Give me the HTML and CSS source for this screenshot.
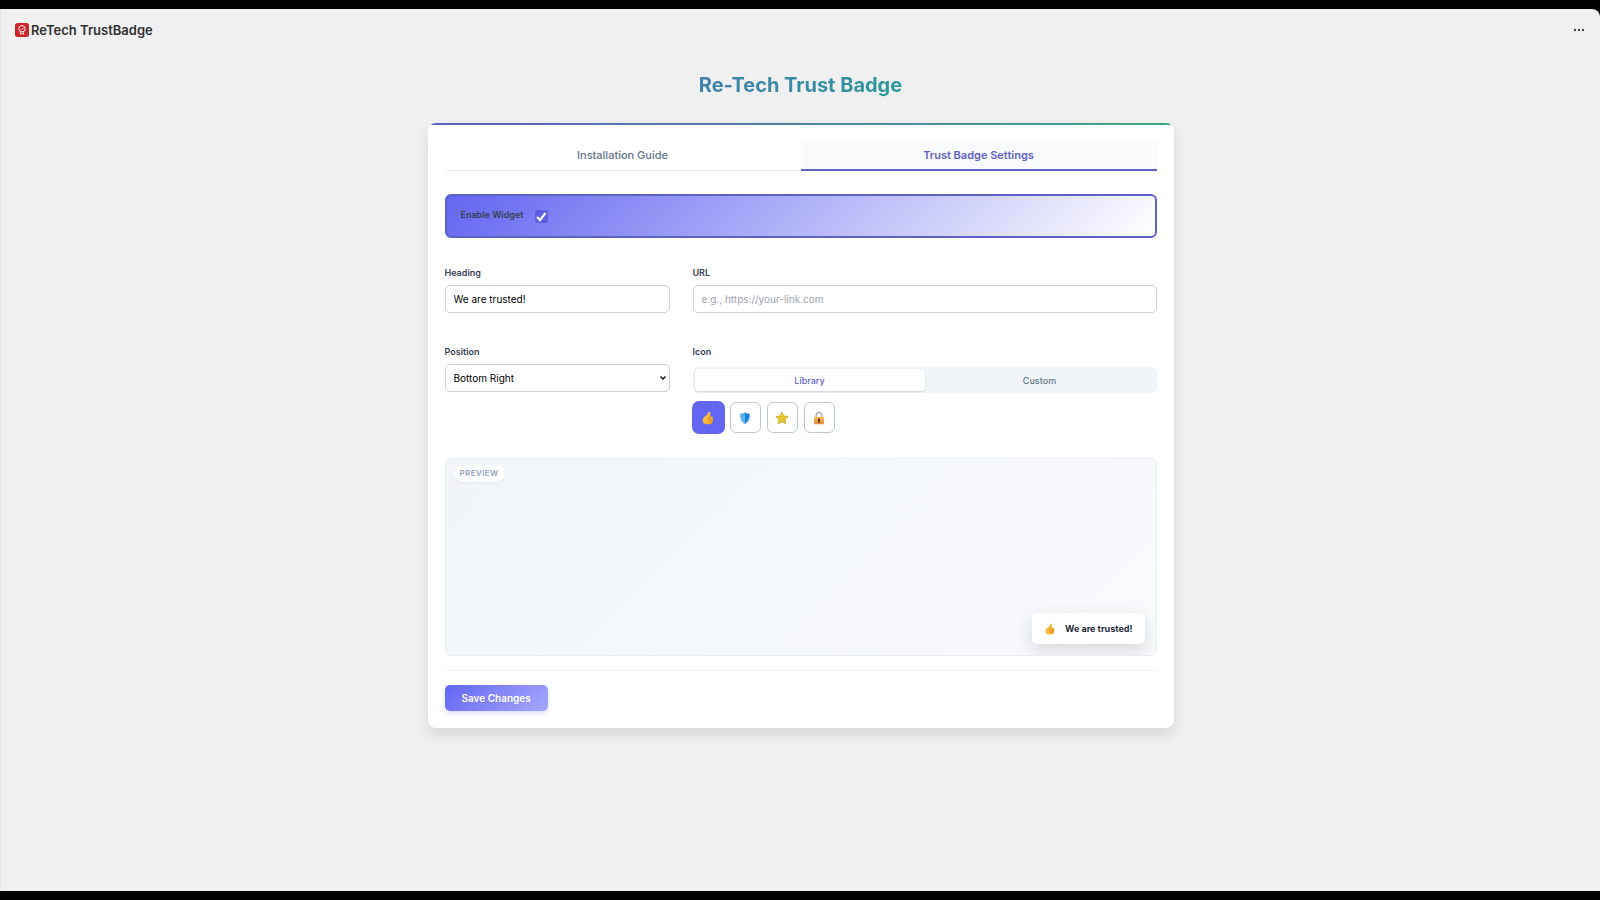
FILE: index.html
```html
<!DOCTYPE html>
<html lang="en">
<head>
    <meta charset="UTF-8">
    <meta name="viewport" content="width=device-width, initial-scale=1.0">
    <title>ReTech TrustBadge</title>
    <link rel="stylesheet" href="styles.css">
</head>
<body>
    <svg class="sprite" aria-hidden="true">
        <defs>
            <linearGradient id="thumb-fill" x1="0" y1="0" x2="1" y2="1">
                <stop offset="0" stop-color="#ffd45c"/>
                <stop offset="1" stop-color="#ef9b22"/>
            </linearGradient>
            <linearGradient id="lock-fill" x1="0" y1="0" x2="0" y2="1">
                <stop offset="0" stop-color="#f9bd62"/>
                <stop offset="1" stop-color="#e58a35"/>
            </linearGradient>
        </defs>
        <symbol id="icon-thumb" viewBox="0 0 16 16">
            <path d="M9.2.8c1.400 0 1.900 1.500 1.500 3.200L10.200 6.400h1.700c1.600 0 2.300 1.400 1.500 2.300.7.700.6 1.700-.1 2.200.4.900.1 1.800-.6 2.200.1 1.200-.7 2-2 2H6.800c-3 0-5-1.500-5-4.200 0-2.400 1.500-3.600 3.300-5.100C6.800 4.400 7.900 3.400 8 2 8 1.200 8.400.8 9.200.8z" fill="url(#thumb-fill)"/>
            <path d="M9.500 6.600c-1.500.6-2 1.700-1.500 2.700M9.500 8.700h3.600M9.400 10.900h3.600M9.500 13h3" fill="none" stroke="#d98218" stroke-width=".7" stroke-linecap="round"/>
        </symbol>
        <symbol id="icon-shield" viewBox="0 0 16 16">
            <path d="M8 1c1.700 1.200 3.400 1.700 5.800 1.800.3 5.800-1.500 9.900-5.800 12.400C3.700 12.700 1.900 8.600 2.200 2.800 4.600 2.700 6.300 2.200 8 1z" fill="#8fbbdc"/>
            <path d="M8 1.900c1.500 1 3.200 1.500 5 1.600.1 5-1.500 8.500-5 10.800z" fill="#1583d8"/>
            <path d="M8 1.900C6.500 2.900 4.800 3.400 3 3.500c-.1 5 1.500 8.500 5 10.800z" fill="#53b7f4"/>
        </symbol>
        <symbol id="icon-star" viewBox="0 0 16 16">
            <path d="M8 1.300l2.100 4.300 4.900.7-3.500 3.400.8 4.900L8 12.300l-4.300 2.300.8-4.900L1 6.300l4.900-.7z" fill="#e6c62f" stroke="#d2ae28" stroke-width="1" stroke-linejoin="round"/>
        </symbol>
        <symbol id="icon-lock" viewBox="0 0 16 16">
            <path d="M4.700 7.500V5a3.300 3.300 0 0 1 6.600 0v2.500" fill="none" stroke="#a9adb2" stroke-width="1.500"/>
            <rect x="2.200" y="6.600" width="11.600" height="8.400" rx="1.200" fill="url(#lock-fill)"/>
            <path d="M8 8.500a1.400 1.400 0 0 1 .8 2.500l.4 2.400H6.800l.4-2.400A1.400 1.400 0 0 1 8 8.500z" fill="#5a3213"/>
        </symbol>
    </svg>

    <div class="app">
        <header class="topbar">
            <div class="brand">
                <svg class="brand-logo" viewBox="0 0 14 14" aria-hidden="true">
                    <rect width="14" height="14" rx="2.500" fill="#c9252d"/>
                    <circle cx="7" cy="5.800" r="3.200" fill="none" stroke="#fff" stroke-width=".9"/>
                    <path d="M5.500 5.800l1.100 1.100L8.600 4.800M5.400 8.800v2.500L7 10.500l1.600.8V8.800" fill="none" stroke="#fff" stroke-width=".8"/>
                </svg>
                <span>ReTech TrustBadge</span>
            </div>
            <button type="button" class="menu-btn" aria-label="More actions">
                <svg viewBox="0 0 12 4" aria-hidden="true">
                    <circle cx="2" cy="2" r="1.200"/>
                    <circle cx="6" cy="2" r="1.200"/>
                    <circle cx="10" cy="2" r="1.200"/>
                </svg>
            </button>
        </header>

        <main class="container">
            <h1>Re-Tech Trust Badge</h1>

            <form class="card">
                <div class="tabs" role="tablist">
                    <button type="button" class="tab" role="tab">Installation Guide</button>
                    <button type="button" class="tab active" role="tab" aria-selected="true">Trust Badge Settings</button>
                </div>

                <div class="enable-box">
                    <label for="enable">Enable Widget</label>
                    <input type="checkbox" id="enable" class="enable-check" checked>
                </div>

                <div class="form-grid">
                    <div class="field">
                        <label for="heading">Heading</label>
                        <input type="text" id="heading" class="control" value="We are trusted!">
                    </div>
                    <div class="field">
                        <label for="url">URL</label>
                        <input type="text" id="url" class="control" placeholder="e.g., https://your-link.com">
                    </div>
                    <div class="field">
                        <label for="position">Position</label>
                        <div class="select-wrap">
                            <select id="position" class="control">
                                <option>Bottom Right</option>
                            </select>
                            <svg class="chevron" viewBox="0 0 8 6" aria-hidden="true"><path d="M1.500 1.500L4 4l2.500-2.500"/></svg>
                        </div>
                    </div>
                    <div class="field">
                        <span class="label" id="icon-label">Icon</span>
                        <div class="segmented">
                            <button type="button" class="segment active">Library</button>
                            <button type="button" class="segment">Custom</button>
                        </div>
                        <div class="icon-list" role="group" aria-labelledby="icon-label">
                            <button type="button" class="icon-btn selected" aria-label="Thumbs up"><svg><use href="#icon-thumb"/></svg></button>
                            <button type="button" class="icon-btn" aria-label="Shield"><svg><use href="#icon-shield"/></svg></button>
                            <button type="button" class="icon-btn" aria-label="Star"><svg><use href="#icon-star"/></svg></button>
                            <button type="button" class="icon-btn" aria-label="Lock"><svg><use href="#icon-lock"/></svg></button>
                        </div>
                    </div>
                </div>

                <div class="preview">
                    <span class="preview-tag">PREVIEW</span>
                    <div class="badge">
                        <svg><use href="#icon-thumb"/></svg>
                        <span>We are trusted!</span>
                    </div>
                </div>

                <div class="actions">
                    <button type="submit" class="save-btn">Save Changes</button>
                </div>
            </form>
        </main>
    </div>
</body>
</html>
```
FILE: styles.css
```css
* {
    box-sizing: border-box;
}
body {
    margin: 0;
    padding: 9px 0;
    min-height: 100vh;
    display: flex;
    background: #000;
    font-family: Inter, "Liberation Sans", sans-serif;
    font-size: 9px;
    color: #1e293b;
}
button, input, select {
    font: inherit;
}
button {
    cursor: pointer;
}
.sprite {
    position: absolute;
    width: 0;
    height: 0;
}
.app {
    flex: 1;
    background: #f0f0f0;
    border-left: 1px solid #e6e6e6;
    border-top-right-radius: 8px;
}

/* top bar */
.topbar {
    display: flex;
    align-items: center;
    justify-content: space-between;
    height: 42px;
    padding: 0 15px 0 14px;
    border-bottom: 1px solid #ededed;
}
.brand {
    display: flex;
    align-items: center;
    gap: 2px;
    font-size: 13px;
    font-weight: 600;
    color: #303030;
}
.brand-logo {
    width: 14px;
    height: 14px;
}
.menu-btn {
    display: flex;
    padding: 0;
    border: 0;
    background: none;
}
.menu-btn svg {
    width: 12px;
    height: 4px;
    fill: #4a4a4a;
}

.container {
    max-width: 746px;
    margin: 0 auto;
    padding-top: 21px;
}
h1 {
    margin: 0 0 25px;
    font-size: 20px;
    line-height: 26px;
    font-weight: 700;
    text-align: center;
    background: linear-gradient(90deg, #5b5fc7, #10b981);
    -webkit-background-clip: text;
    background-clip: text;
    color: transparent;
}
.card {
    position: relative;
    padding: 18px 17px 17px;
    background: #fff;
    border-radius: 8px;
    overflow: hidden;
    box-shadow: 0 7px 14px rgba(0, 0, 0, 0.1);
}
.card::before {
    content: "";
    position: absolute;
    inset: 0 0 auto;
    height: 2px;
    background: linear-gradient(90deg, #5f61c4, #3fa583);
}

/* tabs */
.tabs {
    display: flex;
    margin-bottom: 23px;
    border-bottom: 1px solid #e5e9ee;
}
.tab {
    flex: 1;
    height: 30px;
    margin-bottom: -1px;
    padding: 0;
    border: 0;
    border-bottom: 2px solid transparent;
    background: none;
    font-size: 11px;
    font-weight: 500;
    color: #64748b;
}
.tab.active {
    border-bottom-color: #5f61c4;
    background: #f8fafc;
    font-weight: 600;
    color: #5f61c4;
}

.enable-box {
    display: flex;
    align-items: center;
    gap: 12px;
    height: 44px;
    margin-bottom: 28px;
    padding: 0 14px;
    border: 2px solid #5f61c4;
    border-radius: 6px;
    background: linear-gradient(135deg, #6366f1, #fff);
}
.enable-box label {
    padding-bottom: 4px;
    font-weight: 600;
    color: #374151;
}
.enable-check {
    appearance: none;
    width: 13px;
    height: 13px;
    margin: 0;
    border-radius: 2px;
    background: #5d5fe0 url("data:image/svg+xml,%3Csvg xmlns='http://www.w3.org/2000/svg' viewBox='0 0 13 13'%3E%3Cpath d='M2 7l3 3L10.500 3' fill='none' stroke='white' stroke-width='2.200'/%3E%3C/svg%3E");
}

/* fields */
.form-grid {
    display: grid;
    grid-template-columns: 225px 1fr;
    gap: 32px 23px;
}
.field label,
.label {
    display: block;
    margin-bottom: 5px;
    line-height: 14px;
    font-weight: 600;
    color: #374151;
}
.control {
    display: block;
    width: 100%;
    height: 28px;
    padding: 0 8px;
    border: 1px solid #cbd0d6;
    border-radius: 5px;
    background: #fff;
    font-size: 10px;
    color: #000;
}
.control::placeholder {
    color: #9ca3af;
}
.select-wrap {
    position: relative;
}
select.control {
    appearance: none;
}
.chevron {
    position: absolute;
    right: 3px;
    top: 11px;
    width: 8px;
    height: 6px;
    fill: none;
    stroke: #111;
    stroke-width: 1.5;
    pointer-events: none;
}
.segmented {
    display: flex;
    margin: 8px 0 9px;
    padding: 2px;
    border-radius: 6px;
    background: #f1f5f9;
}
.segment {
    flex: 1;
    height: 22px;
    padding: 0;
    border: 0;
    border-radius: 4px;
    background: none;
    font-weight: 500;
    color: #64748b;
}
.segment.active {
    background: #fff;
    color: #5f61c4;
    box-shadow: 0 1px 2px rgba(0, 0, 0, 0.15);
}
.icon-list {
    display: flex;
    gap: 6px;
}
.icon-btn {
    display: flex;
    align-items: center;
    justify-content: center;
    width: 31px;
    height: 31px;
    padding: 0;
    border: 1px solid #bcc7d2;
    border-radius: 6px;
    background: #fff;
}
.icon-btn svg,
.badge svg {
    width: 14px;
    height: 14px;
}
.icon-btn.selected {
    border-color: #6366f1;
    background: #6366f1;
    box-shadow: 0 0 0 1px #6366f1;
}

/* preview */
.preview {
    position: relative;
    height: 198px;
    margin: 25px 0 14px;
    border: 1px solid #e8edf3;
    border-radius: 6px;
    background: linear-gradient(135deg, #f1f5f9, #f8fafc);
    overflow: hidden;
}
.preview-tag {
    position: absolute;
    top: 6px;
    left: 8px;
    padding: 0 6px;
    border-radius: 9px;
    background: #fff;
    font-size: 8px;
    line-height: 17px;
    font-weight: 600;
    letter-spacing: 0.4px;
    color: #94a3b8;
    box-shadow: 0 1px 2px rgba(0, 0, 0, 0.06);
}
.badge {
    position: absolute;
    right: 11px;
    bottom: 11px;
    display: flex;
    align-items: center;
    gap: 9px;
    height: 31px;
    padding: 0 12px;
    border-radius: 5px;
    background: #fff;
    font-weight: 700;
    box-shadow: 0 6px 18px rgba(0, 0, 0, 0.14);
}
.badge svg {
    width: 12px;
    height: 12px;
}

.actions {
    padding-top: 14px;
    border-top: 1px solid #f1f3f5;
}
.save-btn {
    display: block;
    height: 26px;
    padding: 0 17px;
    border: 0;
    border-radius: 5px;
    background: linear-gradient(135deg, #6366f1, #a5a8fb);
    font-size: 10px;
    font-weight: 600;
    color: #fff;
    box-shadow: 0 2px 4px rgba(99, 102, 241, 0.25);
}
```
